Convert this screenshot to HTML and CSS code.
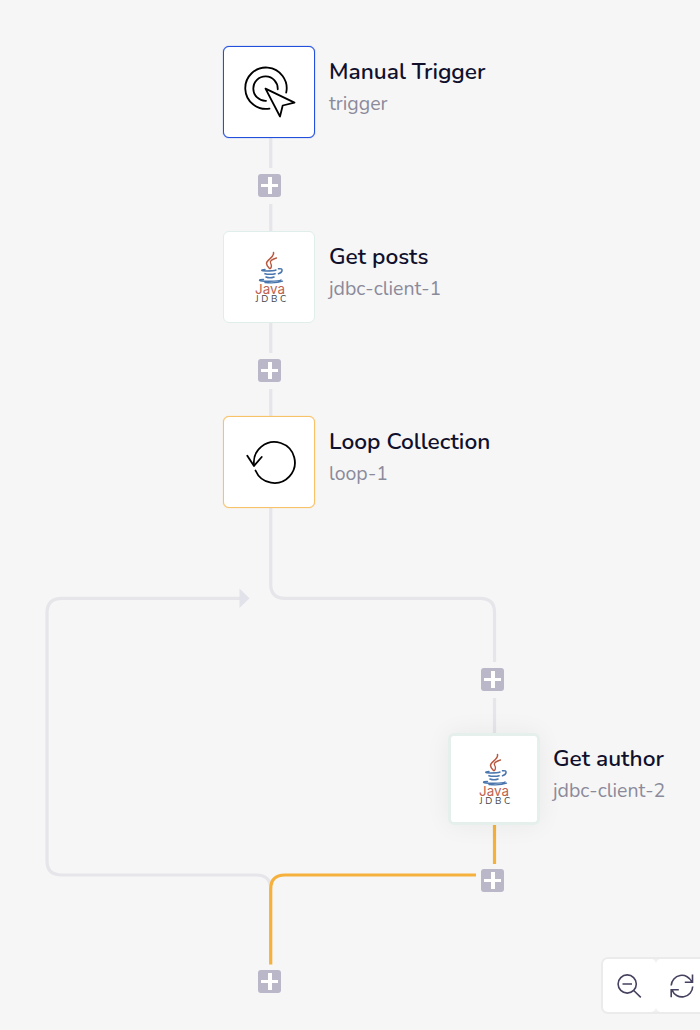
FILE: index.html
```html
<!DOCTYPE html>
<html lang="en">

<head>
    <meta charset="UTF-8">
    <meta name="viewport" content="width=device-width, initial-scale=1.0">
    <title>Flow Designer</title>
    <link rel="stylesheet" href="styles.css">
</head>

<body>
    <main class="canvas">
        <!-- shared cup icon -->
        <svg class="defs" width="0" height="0">
            <symbol id="icon-cup" viewBox="0 0 92 92">
                <g fill="none" stroke="#b9573f" stroke-linecap="round">
                    <path stroke-width="1.5" d="M50.500 21.500c1 5-7 7-7 11 0 2 1.500 3.500 3 5" />
                    <path stroke-width="1.3" d="M53.500 27c-4 1-7 3-6 5s2 3 0 5.500" />
                </g>
                <g fill="none" stroke="#4a76ad" stroke-linecap="round">
                    <path stroke-width="1.4" d="M42 38.500c-5 .3-4 1.500 1 1.500s8 0 10-1" />
                    <path stroke-width="1.5" d="M55.500 37.800c5-1 4.500 3.500 0 5" />
                    <path stroke-width="1.6" d="M42 42.700c2 .8 8 .8 10 0M43 46c2 .8 6 .8 8 0" />
                    <path stroke-width="1.4" d="M40.500 48.500c-5 0-6 1.500 1 1.700s15 0 16.500-1.200M42 51.500c6 .6 13 .4 17.500-1.300" />
                </g>
            </symbol>
        </svg>

        <svg class="edges" width="700" height="1030" viewBox="0 0 700 1030">
            <path class="edge" d="M270.700 138V168M270.700 204V232M270.700 323V353M270.700 389V417" />
            <path class="edge" d="M270.700 508V584Q270.700 598.300 285 598.300H480Q494.500 598.300 494.500 612V662" />
            <path class="edge" d="M494.500 698V735" />
            <path class="edge" d="M270.700 889Q270.700 875 256 875H62Q47 875 47 861V613Q47 598.300 62 598.300H240" />
            <path class="arrow" d="M239.500 588.500L249.500 598.300L239.500 608Z" />
            <path class="edge active" d="M494.500 825V864" />
            <path class="edge active" d="M476 875H285Q270.700 875 270.700 889V964.500" />
        </svg>

        <div class="node trigger">
            <div class="card">
                <svg width="92" height="92" viewBox="0 0 92 92" class="line-icon">
                    <path d="M63.200 46.600A20.700 20.700 0 1 0 46.500 62.600" />
                    <path d="M54.700 43.300A12.200 12.200 0 1 0 43 54.800" />
                    <path d="M42.500 42.600L71.500 56.600L59.700 59.500L57 70.500Z" />
                </svg>
            </div>
            <div class="info">
                <h2 class="name">Manual Trigger</h2>
                <p class="id">trigger</p>
            </div>
        </div>

        <div class="node posts">
            <div class="card">
                <svg width="92" height="92" viewBox="0 0 92 92">
                    <use href="#icon-cup" width="92" height="92" />
                    <text class="java-text" x="32" y="63.300" textLength="30" lengthAdjust="spacingAndGlyphs">Java</text>
                    <text class="jdbc-text" x="32.500" y="71" textLength="31">JDBC</text>
                </svg>
            </div>
            <div class="info">
                <h2 class="name">Get posts</h2>
                <p class="id">jdbc-client-1</p>
            </div>
        </div>

        <div class="node loop">
            <div class="card">
                <svg width="92" height="92" viewBox="0 0 92 92" class="line-icon">
                    <path d="M31 48.800A20.500 20.500 0 1 1 32.500 54.500" />
                    <path d="M24.300 39.700L31 50L38.700 41" />
                </svg>
            </div>
            <div class="info">
                <h2 class="name">Loop Collection</h2>
                <p class="id">loop-1</p>
            </div>
        </div>

        <div class="node author">
            <div class="card">
                <svg width="92" height="92" viewBox="0 0 92 92">
                    <use href="#icon-cup" width="92" height="92" />
                    <text class="java-text" x="32" y="63.300" textLength="30" lengthAdjust="spacingAndGlyphs">Java</text>
                    <text class="jdbc-text" x="32.500" y="71" textLength="31">JDBC</text>
                </svg>
            </div>
            <div class="info">
                <h2 class="name">Get author</h2>
                <p class="id">jdbc-client-2</p>
            </div>
        </div>

        <button class="add add-1" aria-label="Add step"></button>
        <button class="add add-2" aria-label="Add step"></button>
        <button class="add add-3" aria-label="Add step"></button>
        <button class="add add-4" aria-label="Add step"></button>
        <button class="add add-5" aria-label="Add step"></button>

        <div class="toolbar">
            <button class="tool" aria-label="Zoom out">
                <svg width="28" height="28" viewBox="0 0 28 28">
                    <circle cx="11.200" cy="12" r="9.100" />
                    <path d="M6.500 12H16M17.700 18.500L24.800 25.300" />
                </svg>
            </button>
            <button class="tool" aria-label="Reset view">
                <svg width="28" height="28" viewBox="0 0 28 28">
                    <path d="M2.200 13.500A10.700 10.700 0 0 1 22.800 10M23.500 2.500V10.300H15.800" />
                    <path d="M23.700 14.500A10.700 10.700 0 0 1 3 18M2.200 25.300V17.700H9.800" />
                </svg>
            </button>
        </div>
    </main>
</body>

</html>
```
FILE: styles.css
```css
body {
    margin: 0;
    font-family: Nunito, Lato, sans-serif;
    background-color: #f6f6f6;
}

.canvas {
    position: relative;
    width: 700px;
    height: 1030px;
    overflow: hidden;
}

.defs {
    position: absolute;
}

.edges {
    position: absolute;
    top: 0;
    left: 0;
}

.edge {
    fill: none;
    stroke: #e5e5ea;
    stroke-width: 3.2;
}

.edge.active {
    stroke: #f6b03c;
}

.arrow {
    fill: #e2e2ea;
}

/* nodes */
.node {
    position: absolute;
    display: flex;
    gap: 14px;
}

.trigger {
    left: 223px;
    top: 46px;
}

.posts {
    left: 223px;
    top: 231px;
}

.loop {
    left: 223px;
    top: 416px;
}

.author {
    left: 448px;
    top: 733px;
    gap: 13px;
}

.card {
    box-sizing: border-box;
    width: 92px;
    height: 92px;
    border: 1px solid #dfeeea;
    border-radius: 6px;
    background-color: #fff;
}

.card svg {
    display: block;
    margin: -1px;
}

.trigger .card {
    border-color: #2250dd;
    box-shadow: 0 0 1px #2250dd;
}

.loop .card {
    border-color: #f8c268;
    box-shadow: 0 0 1px #f8c268;
}

.author .card {
    border: 3px solid #e5f0ed;
    box-shadow: 0 0 26px rgba(0, 0, 0, 0.06);
}

.author .card svg {
    margin: -3px -4px;
}

.line-icon {
    fill: none;
    stroke: #000;
    stroke-width: 1.8;
    stroke-linecap: round;
    stroke-linejoin: round;
}

.java-text {
    font: 13.5px Inter, sans-serif;
    fill: #c0624f;
}

.jdbc-text {
    font: 9.5px Nunito, Lato, sans-serif;
    fill: #444;
}

.info {
    padding-top: 10px;
    white-space: nowrap;
}

.name {
    margin: 0;
    font-size: 22.7px;
    line-height: 32px;
    font-weight: 600;
    color: #10102d;
}

.id {
    margin: 0;
    font-size: 19.5px;
    line-height: 32px;
    color: #8b8a9b;
}

/* plus buttons */
.add {
    position: absolute;
    width: 23px;
    height: 23px;
    padding: 0;
    border: 0;
    border-radius: 3px;
    background: linear-gradient(#fff, #fff) center / 17px 3px no-repeat,
        linear-gradient(#fff, #fff) 10px 3px / 4px 17px no-repeat,
        #b9b7c8;
}

.add-1 {
    left: 258px;
    top: 174px;
}

.add-2 {
    left: 258px;
    top: 359px;
}

.add-3 {
    left: 481px;
    top: 668px;
}

.add-4 {
    left: 481px;
    top: 869px;
}

.add-5 {
    left: 258px;
    top: 970px;
}

.toolbar {
    position: absolute;
    left: 601px;
    top: 957px;
    display: flex;
    border: 2px solid #ebebec;
    border-radius: 7px;
    background-color: #f1f1f2;
}

.tool {
    width: 53px;
    height: 53px;
    padding: 0;
    border: 0;
    border-radius: 5px;
    background-color: #fff;
}

.tool svg {
    display: block;
    margin: 0 auto;
    fill: none;
    stroke: #45415e;
    stroke-width: 1.6;
}
```
